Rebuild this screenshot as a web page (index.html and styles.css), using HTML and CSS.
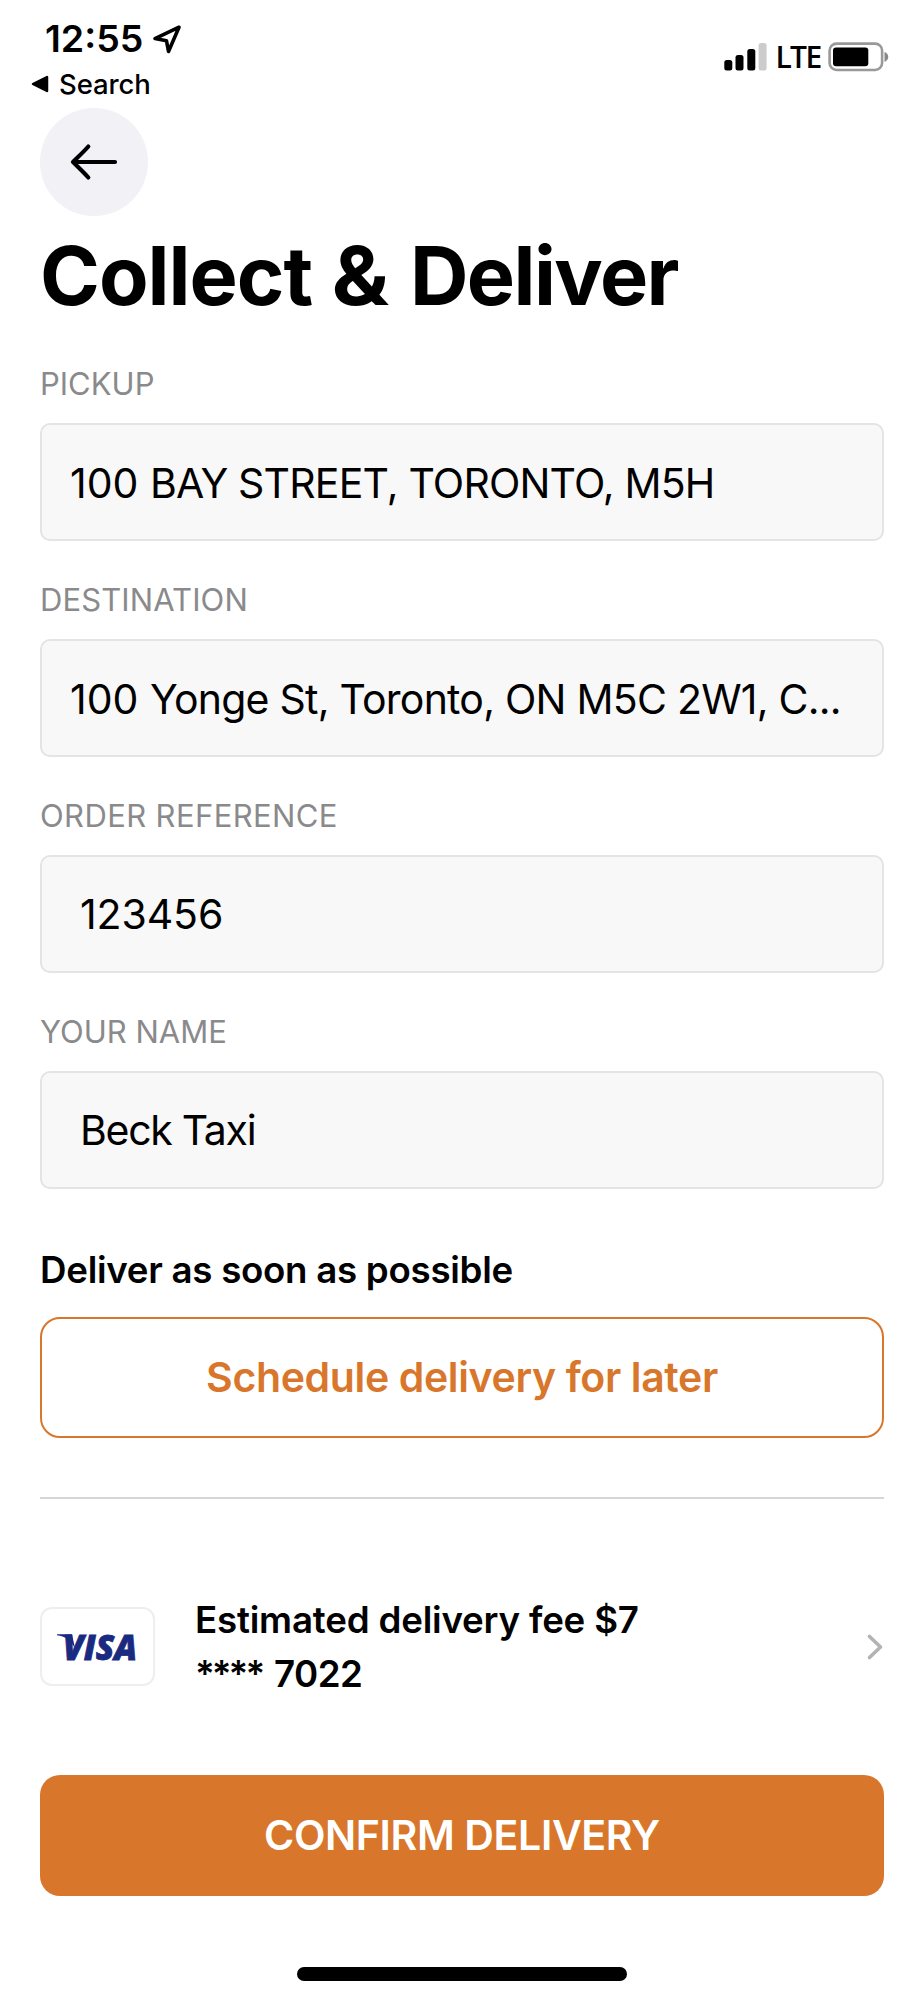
FILE: index.html
```html
<!DOCTYPE html>
<html lang="en">
<head>
<meta charset="utf-8">
<title>Collect &amp; Deliver</title>
<link rel="stylesheet" href="styles.css">
</head>
<body>
<div class="screen">
  <header class="status">
    <div class="status-left">
      <div class="clock"><span class="time">12:55</span>
        <svg class="location" width="32" height="32" viewBox="0 0 32 32"><path d="M28 4.200 4 15.600 15.500 17.800 17.500 28.500Z" fill="none" stroke="#000" stroke-width="3.600" stroke-linejoin="round"/></svg>
      </div>
      <div class="return"><svg width="18" height="18" viewBox="0 0 18 18"><path d="M16 2v14L2 9Z" stroke="#000" stroke-width="2.500" stroke-linejoin="round"/></svg><span class="search">Search</span></div>
    </div>
    <div class="status-right">
      <svg width="43" height="28" viewBox="0 0 43 28"><rect x=".3" y="17" width="8" height="10.500" rx="2.500"/><rect x="11.500" y="12" width="8" height="15.500" rx="2.500"/><rect x="23.300" y="6" width="8" height="21.500" rx="2.500"/><rect x="34.600" y="0" width="8" height="27.500" rx="2.500" fill="#ccc"/></svg>
      <span class="lte">LTE</span>
      <svg class="battery" width="62" height="30" viewBox="0 0 62 30"><rect x="1.600" y="1.600" width="52.500" height="26.400" rx="7" fill="none" stroke="#999" stroke-width="2.600"/><rect x="5" y="5.600" width="35.300" height="18.600" rx="3"/><path d="M56.500 10c5 1.800 5 8 0 10Z" fill="#888"/></svg>
    </div>
  </header>
  <main class="content">
    <button class="back" aria-label="Back"><svg width="50" height="40" viewBox="0 0 50 40"><path d="M46 20H4M19.300 4.500C15 9.500 9 15 4 20c5 5 11 10.500 15.300 15.500" fill="none" stroke="#000" stroke-width="4.200" stroke-linecap="round" stroke-linejoin="round"/></svg></button>
    <h1 class="title">Collect <span class="amp">&amp;</span> <span class="deliver">Deliver</span></h1>
    <div class="form">
      <div class="field"><div class="label">PICKUP</div><div class="input">100&nbsp;<span class="street">BAY STREET, TORONTO, M5H</span></div></div>
      <div class="field"><div class="label destination">DESTINATION</div><div class="input">100&nbsp;<span class="address">Yonge St, Toronto, ON M5C 2W1, C...</span></div></div>
      <div class="field"><div class="label wide">ORDER REFERENCE</div><div class="input inset number">123456</div></div>
      <div class="field"><div class="label">YOUR NAME</div><div class="input inset name">Beck Taxi</div></div>
    </div>
    <p class="when">Deliver as soon as possible</p>
    <button class="button outline">Schedule delivery for later</button>
    <hr class="rule">
    <div class="payment">
      <div class="card"><svg width="84" height="56" viewBox="0 0 84 56"><text class="visa" x="7" y="40.500" textLength="74" lengthAdjust="spacingAndGlyphs">VISA</text><path d="M1 15.200h15l3 14C14 21 9 17.300 1 16.300Z" fill="#1a2a80"/></svg></div>
      <div class="fee"><div class="amount">Estimated delivery fee $7</div><div class="digits"><span class="mask">****</span> 7022</div></div>
      <svg class="chevron" width="19" height="28" viewBox="0 0 19 28"><path d="M4.500 3.500 15.500 14 4.500 24.500" fill="none" stroke="#b3b3b3" stroke-width="3.600" stroke-linecap="round" stroke-linejoin="round"/></svg>
    </div>
    <button class="button solid">CONFIRM DELIVERY</button>
  </main>
  <div class="home"></div>
</div>
</body>
</html>
```
FILE: styles.css
```css
* { box-sizing: border-box; }
body { margin: 0; background: #fff; color: #000; font-family: Inter, "Liberation Sans", sans-serif; }
button { font-family: inherit; padding: 0; border: 0; }
svg { display: block; flex: none; }
.screen { width: 924px; height: 2000px; overflow: hidden; }
.status { display: flex; justify-content: space-between; height: 108px; padding: 17px 34px 0 31px; }
.clock { display: flex; align-items: center; height: 44px; padding-left: 14px; }
.time { font-size: 37.500px; line-height: 44px; font-weight: 600; }
.location { margin-left: 8px; }
.return { display: flex; align-items: center; gap: 10px; height: 36px; margin-top: 5px; }
.search { font-size: 27.500px; font-weight: 500; line-height: 36px; letter-spacing: -.1px; }
.status-right { display: flex; align-items: center; height: 30px; margin-top: 25px; }
.lte { width: 52px; text-align: center; font-family: "Open Sans", sans-serif; font-size: 30px; font-weight: 600; line-height: 30px; letter-spacing: -1.600px; margin-left: 5px; }
.battery { margin-left: 4px; }
.content { padding: 0 40px; }
.back { display: flex; align-items: center; justify-content: center; width: 108px; height: 108px; border-radius: 50%; background: #f1f1f6; }
.title { margin: 11.500px 0 41px; font-size: 81px; line-height: 96px; font-weight: 700; letter-spacing: -1px; white-space: nowrap; }
.amp { display: inline-block; margin: 0 5px 0 3px; transform: scaleX(1.06); }
.deliver { letter-spacing: -1.550px; }
.form { display: grid; grid-template-columns: minmax(0, 1fr); gap: 40px; }
.label { margin-bottom: 20px; font-size: 31px; line-height: 38px; color: #8a8a8c; }
.destination { letter-spacing: .1px; }
.wide { letter-spacing: .38px; }
.input { display: flex; align-items: center; height: 118px; padding: 3px 28px 0; border: 2px solid #e3e3e8; border-radius: 10px; background: #f8f8f8; font-size: 41px; white-space: nowrap; }
.street { letter-spacing: -.82px; }
.address { letter-spacing: -.76px; }
.inset { padding-left: 38px; padding-top: 1px; }
.number { letter-spacing: -.1px; }
.name { letter-spacing: -1.300px; }
.when { margin: 59.500px 0 24.700px; font-size: 36.700px; line-height: 44px; font-weight: 600; letter-spacing: -.28px; }
.button { display: flex; align-items: center; justify-content: center; width: 100%; height: 121px; border-radius: 20px; font-size: 41px; font-weight: 600; letter-spacing: -.36px; }
.outline { border: 2px solid #d8772b; background: #fff; color: #d8772b; }
.solid { background: #d8772b; color: #fff; }
.rule { height: 2.500px; margin: 59px 0 93.500px; border: 0; background: #d5d7d6; }
.payment { display: flex; align-items: center; height: 108px; margin-bottom: 74.300px; }
.card { display: flex; align-items: center; justify-content: center; width: 115px; height: 79px; border: 2px solid #eee; border-radius: 12px; }
.visa { font: italic 800 35px "Open Sans", sans-serif; fill: #1a2a80; stroke: #1a2a80; stroke-width: .8px; }
.fee { flex: 1; margin-left: 40px; font-size: 36.700px; line-height: 54px; font-weight: 600; }
.amount { letter-spacing: -.2px; }
.digits { letter-spacing: -.5px; }
.mask { margin-right: 3px; letter-spacing: -3px; }
.home { width: 330px; height: 14px; margin: 71px auto 0; border-radius: 7px; background: #000; }
```
